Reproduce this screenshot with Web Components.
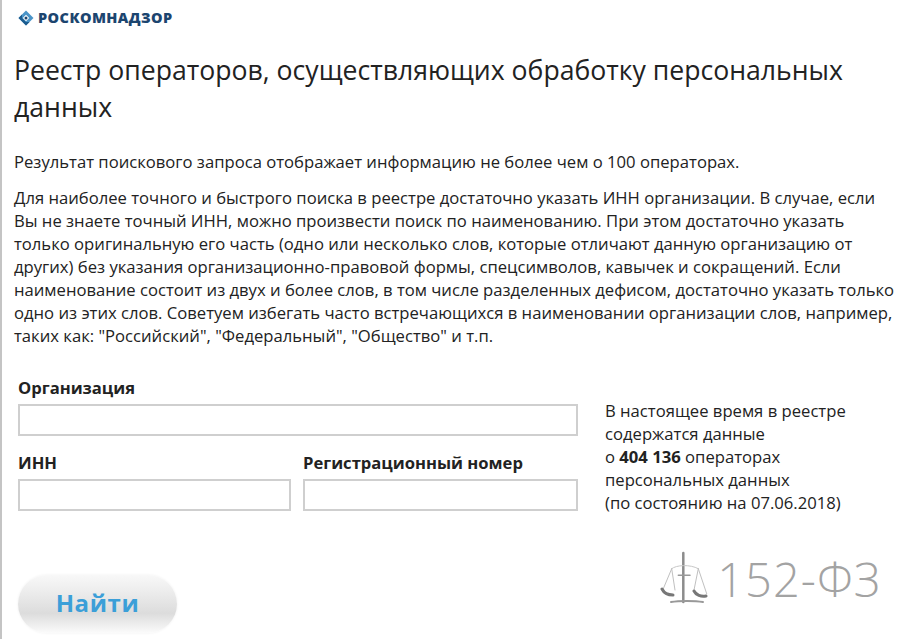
<!DOCTYPE html>
<html lang="ru">
<head>
<meta charset="utf-8">
<title>Реестр операторов</title>
<style>
  html, body { margin: 0; height: 100%; background: #fff; }
  body { font-family: "Open Sans", sans-serif; color: #1f1f1f; overflow: hidden; }
</style>
</head>
<body>
<rkn-page>
  <rkn-logo></rkn-logo>
  <h1 slot="title">Реестр операторов, осуществляющих обработку персональных данных</h1>
  <p slot="intro">Результат поискового запроса отображает информацию не более чем о 100 операторах.</p>
  <p slot="intro">Для наиболее точного и быстрого поиска в реестре достаточно указать ИНН организации. В случае, если<br>Вы не знаете точный ИНН, можно произвести поиск по наименованию. При этом достаточно указать<br>только оригинальную его часть (одно или несколько слов, которые отличают данную организацию от<br>других) без указания организационно-правовой формы, спецсимволов, кавычек и сокращений. Если<br>наименование состоит из двух и более слов, в том числе разделенных дефисом, достаточно указать только<br>одно из этих слов. Советуем избегать часто встречающихся в наименовании организации слов, например,<br>таких как: "Российский", "Федеральный", "Общество" и т.п.</p>
  <rkn-search slot="form"></rkn-search>
  <rkn-button slot="action">Найти</rkn-button>
  <rkn-law slot="law"></rkn-law>
</rkn-page>
<script>
  class RknPage extends HTMLElement {
    constructor() {
      super();
      this.attachShadow({ mode: 'open' });
      this.shadowRoot.innerHTML = `
        <style>
          :host {
            display: flex;
            flex-direction: column;
            box-sizing: border-box;
            height: 639px;
            border-left: 2px solid #c4c4c4;
            padding: 9px 0 0 12px;
          }
          ::slotted(h1) {
            margin: 26px 50px 0 0;
            font-size: 26.6px;
            font-weight: 400;
            line-height: 37px;
            color: #222;
          }
          ::slotted(p) {
            margin: 0 0 13px;
            font-size: 16.65px;
            line-height: 23px;
            color: #222;
            white-space: nowrap;
          }
          .intro { margin-top: 24px; }
          .form { margin-top: 18px; }
          .bottom {
            display: flex;
            justify-content: space-between;
            align-items: flex-start;
            margin-top: 61px;
          }
        </style>
        <slot></slot>
        <slot name="title"></slot>
        <div class="intro"><slot name="intro"></slot></div>
        <div class="form"><slot name="form"></slot></div>
        <div class="bottom">
          <slot name="action"></slot>
          <slot name="law"></slot>
        </div>
      `;
    }
  }

  class RknLogo extends HTMLElement {
    constructor() {
      super();
      this.attachShadow({ mode: 'open' });
      this.shadowRoot.innerHTML = `
        <style>
          :host {
            display: flex;
            align-items: center;
            gap: 4px;
            height: 17px;
            margin-left: 4px;
          }
          svg { width: 16px; height: 16px; flex: none; }
          span {
            font-size: 14.5px;
            font-weight: 800;
            letter-spacing: 0.42px;
            color: #1c456f;
            line-height: 17px;
          }
        </style>
        <svg viewBox="0 0 16 16">
          <path d="M8 .5 15.500 8 8 15.500.5 8Z" fill="#4a94c8"/>
          <path d="M8 15.500.5 8 4 4.500V8l4 4h3.500Z" fill="#1c5c8f"/>
          <path d="M8 4.800 11.200 8 8 11.200 4.800 8Z" fill="#fff"/>
          <circle cx="8" cy="8" r="1.500" fill="#1c456f"/>
        </svg>
        <span>РОСКОМНАДЗОР</span>
      `;
    }
  }

  class RknField extends HTMLElement {
    constructor() {
      super();
      this.attachShadow({ mode: 'open' });
      this.shadowRoot.innerHTML = `
        <style>
          :host { display: block; }
          label {
            display: block;
            font-size: 16.6px;
            font-weight: 700;
            line-height: 20px;
            color: #222;
            margin-bottom: 6px;
            white-space: nowrap;
          }
          input {
            display: block;
            box-sizing: border-box;
            width: 100%;
            height: 32px;
            margin: 0;
            border: 2px solid #cfcfcf;
            background: #fff;
          }
        </style>
        <label for="f"></label>
        <input id="f" type="text">
      `;
    }
    connectedCallback() {
      this.shadowRoot.querySelector('label').textContent = this.getAttribute('label') || '';
    }
  }

  class RknSearch extends HTMLElement {
    constructor() {
      super();
      this.attachShadow({ mode: 'open' });
      this.shadowRoot.innerHTML = `
        <style>
          :host {
            display: flex;
            gap: 27px;
            padding-left: 4px;
          }
          .fields {
            flex: none;
            width: 560px;
            display: grid;
            grid-template-columns: 273px 275px;
            column-gap: 12px;
            row-gap: 14px;
          }
          .wide { grid-column: 1 / 3; }
          .note {
            font-size: 16.65px;
            line-height: 23px;
            color: #222;
            padding-top: 21px;
            white-space: nowrap;
          }
          b { font-weight: 700; }
        </style>
        <div class="fields">
          <rkn-field class="wide" label="Организация"></rkn-field>
          <rkn-field label="ИНН"></rkn-field>
          <rkn-field label="Регистрационный номер"></rkn-field>
        </div>
        <div class="note">
          В настоящее время в реестре<br>
          содержатся данные<br>
          о <b>404 136</b> операторах<br>
          персональных данных<br>
          (по состоянию на 07.06.2018)
        </div>
      `;
    }
  }

  class RknButton extends HTMLElement {
    constructor() {
      super();
      this.attachShadow({ mode: 'open' });
      this.shadowRoot.innerHTML = `
        <style>
          :host { display: block; margin-left: 4px; }
          button {
            display: block;
            box-sizing: border-box;
            width: 159px;
            height: 58px;
            padding: 0 0 4px;
            border: 0;
            border-radius: 29px;
            background: linear-gradient(#f8f8f8 0%, #ececec 30%, #dcdcdc 66%, #eeeeee 86%, #fbfbfb 100%);
            box-shadow: 0 0 3px #f0f0f0;
            font-family: "Open Sans", sans-serif;
            font-size: 24px;
            font-weight: 700;
            letter-spacing: 0.6px;
            color: #3b9fd8;
          }
        </style>
        <button type="button"><slot></slot></button>
      `;
    }
  }

  class RknLaw extends HTMLElement {
    constructor() {
      super();
      this.attachShadow({ mode: 'open' });
      this.shadowRoot.innerHTML = `
        <style>
          :host {
            display: flex;
            align-items: center;
            gap: 7px;
            margin: -25px 30px 0 0;
          }
          svg { width: 50px; height: 58px; flex: none; }
          span {
            font-family: "Open Sans", sans-serif;
            font-size: 47px;
            font-weight: 300;
            line-height: 58px;
            letter-spacing: 1px;
            color: #a3a3a3;
            white-space: nowrap;
          }
        </style>
        <svg viewBox="0 0 50 58" fill="none" stroke-linecap="round">
          <path d="M23.300 3v49" stroke="#8c8c8c" stroke-width="2.500"/>
          <path d="M18.300 25.300H30" stroke="#999" stroke-width="1.500"/>
          <path d="M11.700 18.700C16 15 30 14 38.300 18.700" stroke="#c8c8c8" stroke-width="1"/>
          <path d="M11.700 18.700 3.300 38.700M11.700 18.700 15 40M38.300 18.700 34 40M38.300 18.700 46.700 43.700" stroke="#c0c0c0" stroke-width="1"/>
          <path d="M2 39c2 4 6 6 11 6M34 41c2 4 7 6 12 5" stroke="#777" stroke-width="3"/>
          <path d="M11 52c8-1.500 24-1.500 32 0" stroke="#999" stroke-width="2"/>
        </svg>
        <span>152-ФЗ</span>
      `;
    }
  }

  customElements.define('rkn-page', RknPage);
  customElements.define('rkn-logo', RknLogo);
  customElements.define('rkn-field', RknField);
  customElements.define('rkn-search', RknSearch);
  customElements.define('rkn-button', RknButton);
  customElements.define('rkn-law', RknLaw);
</script>
</body>
</html>
